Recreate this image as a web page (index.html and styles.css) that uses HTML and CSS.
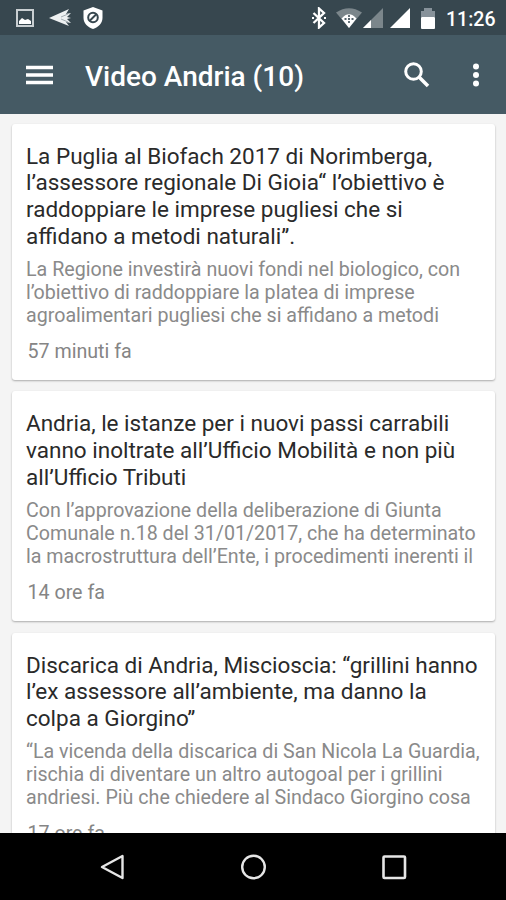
FILE: index.html
```html
<!DOCTYPE html>
<html lang="it">
<head>
    <meta charset="UTF-8">
    <meta name="viewport" content="width=device-width, initial-scale=1.0">
    <title>Video Andria</title>
    <link rel="stylesheet" href="styles.css">
</head>
<body>
    <div class="status-bar">
        <div class="status-left">
            <svg width="18" height="18" viewBox="0 0 18 18">
                <rect x="1" y="1" width="16" height="16" fill="none" stroke="#c9cfd2" stroke-width="2"/>
                <path d="M3 15v-3l3-3 3 2 3-1 3 2v3z" fill="#fff"/>
            </svg>
            <svg class="plane" width="22" height="18" viewBox="0 0 22 18">
                <path d="M0 9L20 0l-3 5 5-1-4 4 4 1-4 1 4 4-5-1 3 4z" fill="#eef1f2"/>
                <path d="M12 8l7-3M12 10l7 3" stroke="#a3adb2" fill="none"/>
            </svg>
            <svg class="shield" width="20" height="22" viewBox="0 0 20 22">
                <path d="M10 0l9.500 3.500V11c0 5-4 9-9.500 11C4.500 20 .5 16 .5 11V3.500z" fill="#fff"/>
                <circle cx="10" cy="10.500" r="4.800" fill="none" stroke="#37474f" stroke-width="2"/>
                <path d="M6.500 14l7-7" stroke="#37474f" stroke-width="2"/>
            </svg>
        </div>
        <div class="status-right">
            <svg class="bluetooth" width="14" height="22" viewBox="0 0 14 22">
                <path d="M1.500 6l10.500 10-5 4.500v-19L12 6 1.500 16" fill="none" stroke="#fff" stroke-width="2.300"/>
                <path d="M0 11h2M12 11h2" stroke="#fff" stroke-width="2"/>
            </svg>
            <svg class="wifi" width="26" height="20" viewBox="0 0 26 20">
                <path d="M0 4.500Q13-4 26 4.500L13 20z" fill="#7b868b"/>
                <path d="M5.500 10.500Q13 2 20.500 10.500L13 20z" fill="#fff"/>
                <path d="M13 7v2M13 13v2M8.500 11h2M15.500 11h2M12 11h2" stroke="#55646c" stroke-width="1.800"/>
            </svg>
            <svg class="signal" width="20" height="20" viewBox="0 0 20 20">
                <path d="M0 20L20 0v20z" fill="#7b868b"/>
                <path d="M0 20l8-8v8z" fill="#fff"/>
            </svg>
            <svg class="signal-full" width="20" height="20" viewBox="0 0 20 20">
                <path d="M0 20L20 0v20z" fill="#fff"/>
            </svg>
            <svg class="battery" width="14" height="21" viewBox="0 0 14 21">
                <path d="M0 3h3V0h8v3h3v6H0z" fill="#87929a"/>
                <rect y="9" width="14" height="12" rx="1" fill="#fff"/>
            </svg>
            <span class="clock">11:26</span>
        </div>
    </div>

    <div class="toolbar">
        <svg class="menu" width="27" height="20" viewBox="0 0 27 20">
            <path d="M0 2.500h27M0 10h27M0 17.500h27" stroke="#fff" stroke-width="3.400"/>
        </svg>
        <h1 class="heading">Video Andria (10)</h1>
        <svg class="search" width="26" height="26" viewBox="0 0 26 26">
            <circle cx="9.500" cy="9.500" r="7.800" fill="none" stroke="#fff" stroke-width="3"/>
            <path d="M15 15l9 9" stroke="#fff" stroke-width="3.500"/>
        </svg>
        <svg class="more" width="6" height="24" viewBox="0 0 6 24">
            <circle cx="3" cy="3.500" r="3" fill="#fff"/>
            <circle cx="3" cy="12" r="3" fill="#fff"/>
            <circle cx="3" cy="20.500" r="3" fill="#fff"/>
        </svg>
    </div>

    <div class="list">
        <div class="card">
            <h2 class="title">La Puglia al Biofach 2017 di Norimberga,<br>l’assessore regionale Di Gioia“ l’obiettivo è<br>raddoppiare le imprese pugliesi che si<br>affidano a metodi naturali”.</h2>
            <p class="text">La Regione investirà nuovi fondi nel biologico, con<br>l’obiettivo di raddoppiare la platea di imprese<br>agroalimentari pugliesi che si affidano a metodi</p>
            <div class="time">57 minuti fa</div>
        </div>
        <div class="card">
            <h2 class="title">Andria, le istanze per i nuovi passi carrabili<br>vanno inoltrate all’Ufficio Mobilità e non più<br>all’Ufficio Tributi</h2>
            <p class="text">Con l’approvazione della deliberazione di Giunta<br>Comunale n.18 del 31/01/2017, che ha determinato<br>la macrostruttura dell’Ente, i procedimenti inerenti il</p>
            <div class="time">14 ore fa</div>
        </div>
        <div class="card">
            <h2 class="title">Discarica di Andria, Miscioscia: “grillini hanno<br>l’ex assessore all’ambiente, ma danno la<br>colpa a Giorgino”</h2>
            <p class="text">“La vicenda della discarica di San Nicola La Guardia,<br>rischia di diventare un altro autogoal per i grillini<br>andriesi. Più che chiedere al Sindaco Giorgino cosa</p>
            <div class="time">17 ore fa</div>
        </div>
    </div>

    <div class="nav-bar">
        <svg width="26" height="26" viewBox="0 0 26 26">
            <path d="M3 13L23.500 2v22z" fill="none" stroke="#e6e6e6" stroke-width="2.400" stroke-linejoin="round"/>
        </svg>
        <svg width="26" height="26" viewBox="0 0 26 26">
            <circle cx="13.500" cy="13" r="11.300" fill="none" stroke="#e6e6e6" stroke-width="2.400"/>
        </svg>
        <svg width="26" height="26" viewBox="0 0 26 26">
            <rect x="2.500" y="2.500" width="21.500" height="21.500" rx="1" fill="none" stroke="#e6e6e6" stroke-width="2.600"/>
        </svg>
    </div>
</body>
</html>
```
FILE: styles.css
```css
*,*::after,*::before{
    box-sizing: border-box;
}
body{
    margin: 0;
    height: 900px;
    overflow: hidden;
    display: flex;
    flex-direction: column;
    font-family: Roboto, sans-serif;
    background-color: #f4f4f4;
}
svg{
    display: block;
    flex: none;
}
.status-bar{
    height: 35px;
    flex: none;
    display: flex;
    justify-content: space-between;
    padding: 1px 11px 0 16px;
    background-color: #37474f;
}
.status-left,.status-right{
    display: flex;
    align-items: center;
}
.plane{
    margin-left: 15px;
}
.shield{
    margin-left: 12px;
}
.wifi{
    margin-left: 10px;
}
.signal{
    margin-left: 1px;
}
.signal-full{
    margin-left: 7px;
}
.battery{
    margin-left: 11px;
}
.clock{
    width: 49px;
    margin: 2px 0 0 11px;
    color: white;
    font-size: 19.500px;
    font-weight: 500;
    white-space: nowrap;
}
.toolbar{
    height: 79px;
    flex: none;
    display: flex;
    align-items: center;
    padding: 1px 27px 0 26px;
    background-color: #455a64;
}
.heading{
    flex: 1;
    margin: 3px 0 0 32px;
    color: white;
    font-size: 28px;
    font-weight: 500;
    white-space: nowrap;
}
.more{
    margin-left: 43px;
}
.list{
    flex: 1;
    min-height: 0;
    overflow: hidden;
    padding: 9.500px 11px 0 12px;
}
.card{
    margin-bottom: 11.400px;
    padding: 19px 14px 17.400px;
    background-color: white;
    border-radius: 3px;
    box-shadow: 0 1px 2px rgba(0, 0, 0, 0.3);
}
.title{
    margin: 0;
    color: #2a2a2a;
    font-size: 22.500px;
    font-weight: 400;
    line-height: 26.800px;
    white-space: nowrap;
}
.text{
    margin: 8px 0 0;
    color: #8a8a8a;
    font-size: 19.650px;
    line-height: 23px;
    white-space: nowrap;
}
.time{
    margin: 13px 0 0 1.500px;
    color: #858585;
    font-size: 19.650px;
    line-height: 23px;
}
.nav-bar{
    height: 67px;
    flex: none;
    display: flex;
    justify-content: center;
    align-items: center;
    gap: 115px;
    background-color: black;
}
```
